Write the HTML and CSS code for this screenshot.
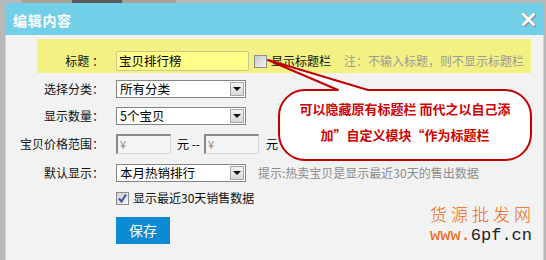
FILE: index.html
```html
<!DOCTYPE html>
<html>
<head>
<meta charset="utf-8">
<link rel="stylesheet" href="styles.css">
</head>
<body>
<div class="topstrip"><span class="strip-img"><span class="strip-dark"></span></span></div>
<div class="dialog">
  <div class="titlebar">
    <span class="title">编辑内容</span>
    <svg class="close" width="15" height="15" viewBox="0 0 15 15">
      <path d="M2.5 2.5 L12.5 12.5 M12.5 2.5 L2.5 12.5" stroke="#8a8a8a" stroke-width="4" stroke-linecap="square" transform="translate(0.7,0.7)"/>
      <path d="M2.5 2.5 L12.5 12.5 M12.5 2.5 L2.5 12.5" stroke="#ffffff" stroke-width="3" stroke-linecap="square"/>
    </svg>
  </div>
  <div class="body">
    <div class="title-row">
      <span class="label tlabel">标题 ：</span>
      <span class="tinput">宝贝排行榜</span>
      <span class="cb"></span>
      <span class="cbtext">显示标题栏</span>
      <span class="note">注：不输入标题，则不显示标题栏</span>
    </div>
    <div class="row r2">
      <span class="label">选择分类：</span>
      <span class="select"><span class="sel-text">所有分类</span><span class="sel-btn"><span class="tri"></span></span></span>
    </div>
    <div class="row r3">
      <span class="label">显示数量：</span>
      <span class="select"><span class="sel-text">5个宝贝</span><span class="sel-btn"><span class="tri"></span></span></span>
    </div>
    <div class="row r4">
      <span class="label">宝贝价格范围：</span>
      <span class="price">¥</span>
      <span class="unit">元 --</span>
      <span class="price p2">¥</span>
      <span class="unit u2">元</span>
    </div>
    <div class="row r5">
      <span class="label">默认显示：</span>
      <span class="select"><span class="sel-text">本月热销排行</span><span class="sel-btn"><span class="tri"></span></span></span>
      <span class="hint">提示:热卖宝贝是显示最近30天的售出数据</span>
    </div>
    <div class="row r6">
      <span class="label"></span>
      <span class="cb checked">
        <svg width="11" height="11" viewBox="0 0 11 11"><path d="M2 5.5 L4.5 8.5 L9 1.5" stroke="#3b4fa8" stroke-width="2" fill="none"/></svg>
      </span>
      <span class="cbtext">显示最近30天销售数据</span>
    </div>
    <div class="row r7">
      <span class="label"></span>
      <span class="btn">保存</span>
    </div>
  </div>
</div>

<svg class="bubble" width="546" height="260" viewBox="0 0 546 260">
  <path d="M305 90 L338 90 L268 60 L368 90 L505 90 A26 26 0 0 1 531 116 L531 134 A26 26 0 0 1 505 160 L305 160 A26 26 0 0 1 279 134 L279 116 A26 26 0 0 1 305 90 Z" fill="#ffffff" stroke="#c00000" stroke-width="2" stroke-linejoin="round"/>
</svg>
<div class="bubble-text">可以隐藏原有标题栏 而代之以自己添<br>加”自定义模块“作为标题栏</div>

<div class="watermark">
  <div class="wm1">货源批发网</div>
  <div class="wm2"><span class="wm-or">www.</span>6pf.cn</div>
</div>
</body>
</html>
```
FILE: styles.css
```css
html, body {
  margin: 0;
  padding: 0;
}
body {
  width: 546px;
  height: 260px;
  background: #b8b8b8;
  font-family: "Noto Sans CJK SC", "Noto Sans", sans-serif;
  font-size: 12px;
  color: #111;
  position: relative;
  overflow: hidden;
}
.topstrip {
  height: 3px;
  display: flex;
}
.strip-img {
  margin-left: 22px;
  width: 154px;
  background: #a8a294;
  display: flex;
}
.strip-dark {
  margin-left: 50px;
  width: 50px;
  background: #5a5a5a;
}
.dialog {
  margin-left: 5px;
  width: 539px;
}
.titlebar {
  height: 32px;
  background: #72cfe8;
  display: flex;
  align-items: center;
  justify-content: space-between;
  padding: 0 8px 0 8px;
}
.title {
  color: #fff;
  font-weight: bold;
  font-size: 14px;
  letter-spacing: 0.7px;
  line-height: 16px;
  margin-top: 2px;
}
.close {
  display: block;
  margin-top: 1px;
}
.body {
  height: 221px;
  background: #f2f2f2;
  border: 1px solid #d2d2d2;
  border-top: none;
  padding-top: 4px;
}
.title-row {
  margin-left: 31px;
  width: 494px;
  height: 22px;
  padding-top: 11px;
  padding-bottom: 1px;
  background: #f3f183;
  display: flex;
  align-items: center;
}
.label {
  width: 98px;
  flex: none;
  text-align: right;
  margin-right: 12px;
  line-height: 16px;
  white-space: pre;
}
.tlabel {
  width: 67px;
}
.tinput {
  width: 129px;
  height: 18px;
  border: 1px solid #c9c98e;
  border-radius: 2px;
  background: #ffff88;
  padding-left: 2px;
  font-size: 12.5px;
  line-height: 18px;
  color: #000;
}
.cb {
  width: 11px;
  height: 11px;
  border: 1px solid #8d8d8d;
  background: linear-gradient(135deg, #c9c9c9, #f4f4f4);
  margin-left: 5px;
  flex: none;
  display: flex;
  align-items: center;
  justify-content: center;
}
.cbtext {
  margin-left: 4px;
  line-height: 16px;
}
.note {
  margin-left: 13px;
  color: #9a9a9a;
  line-height: 16px;
}
.row {
  display: flex;
  align-items: center;
}
.r2 { height: 32px; }
.r3 { height: 22px; }
.r4 { height: 34px; }
.r5 { height: 24px; }
.r6 { height: 26px; }
.r7 { height: 27px; margin-top: 6px; }
.select {
  width: 128px;
  height: 16px;
  border: 1px solid #848484;
  background: #fff;
  display: flex;
  align-items: center;
  justify-content: space-between;
}
.sel-text {
  padding-left: 3px;
  font-size: 12.5px;
  line-height: 16px;
  color: #000;
}
.sel-btn {
  width: 14px;
  height: 14px;
  margin-right: 1px;
  border: 1px solid #a6a6a6;
  background: linear-gradient(#f2f2f2, #d8d8d8);
  box-sizing: border-box;
  display: flex;
  align-items: center;
  justify-content: center;
}
.tri {
  width: 0;
  height: 0;
  border-left: 4px solid transparent;
  border-right: 4px solid transparent;
  border-top: 4px solid #111;
}
.price {
  width: 50px;
  height: 17px;
  border-style: solid;
  border-width: 2px 1px 1px 2px;
  border-color: #8a8a8a #d6d6d6 #d6d6d6 #8a8a8a;
  background: #f4f4f4;
  color: #8a8a8a;
  padding-left: 2px;
  line-height: 17px;
  font-size: 11px;
}
.unit {
  margin-left: 6px;
  line-height: 16px;
  color: #000;
}
.p2 {
  margin-left: 4px;
}
.u2 {
  margin-left: 7px;
}
.hint {
  margin-left: 12px;
  color: #8c8c8c;
  line-height: 16px;
}
.r6 .cb {
  margin-left: 0;
  background: linear-gradient(135deg, #d0d0d0, #f6f6f6);
}
.btn {
  width: 54px;
  height: 27px;
  background: #0b8ad3;
  color: #fff;
  font-size: 14px;
  line-height: 27px;
  text-align: center;
}
.bubble {
  position: absolute;
  left: 0;
  top: 0;
  pointer-events: none;
}
.bubble-text {
  position: absolute;
  left: 279px;
  top: 96px;
  width: 252px;
  text-align: center;
  color: #d00000;
  font-weight: bold;
  font-size: 13px;
  line-height: 26px;
}
.watermark {
  position: absolute;
  left: 430px;
  top: 203px;
  width: 110px;
}
.wm1 {
  color: #f0640a;
  font-size: 17px;
  letter-spacing: 4px;
  line-height: 22px;
  font-weight: 300;
}
.wm2 {
  font-family: "Liberation Mono", monospace;
  font-size: 17px;
  line-height: 20px;
  color: #222;
  margin-top: 1px;
}
.wm-or {
  color: #f0640a;
}
```
